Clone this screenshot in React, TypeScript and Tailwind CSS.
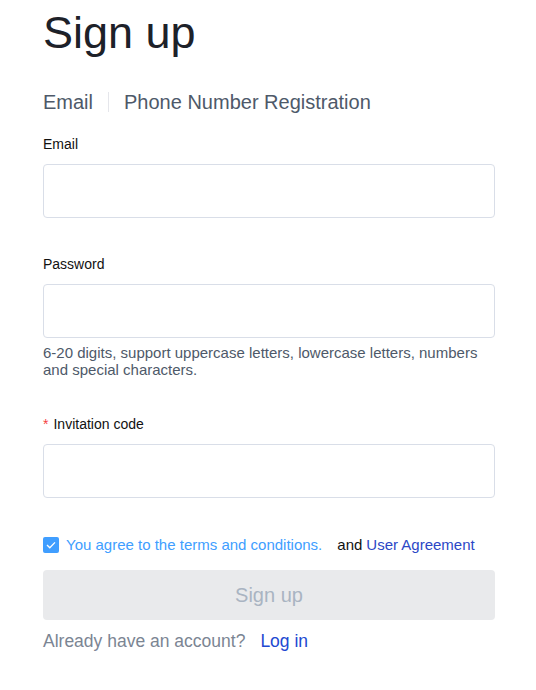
import React, { useState } from "react";

const Field: React.FC<{ label: string; required?: boolean; type?: string; className?: string }> = ({
  label,
  required,
  type = "text",
  className = "",
}) => (
  <div className={className}>
    <label className="block text-[14px] leading-[20px] text-[#111]">
      {required && <span className="mr-[5px] text-[#f53f3f]">*</span>}
      {label}
    </label>
    <input
      type={type}
      className="mt-[10px] block h-[54px] w-full rounded-[4px] border border-[#d9dee8] bg-white px-3 outline-none"
    />
  </div>
);

const App: React.FC = () => {
  const [agree, setAgree] = useState(true);

  return (
    <div className="min-h-[690px] bg-white font-['Liberation_Sans',Arial,sans-serif]">
      <div className="ml-[43px] w-[452px] pt-[10px]">
        <h1 className="text-[45px] leading-[45px] text-[#1d2129]">Sign up</h1>

        {/* tabs */}
        <div className="mt-[33px] flex items-center text-[20px] leading-[28px]">
          <span className="text-[#4e5969]">Email</span>
          <span className="mx-[15px] h-[20px] w-px bg-[#e5e6eb]" />
          <span className="text-[#4e5969]">Phone Number Registration</span>
        </div>

        <Field label="Email" className="mt-[18px]" />
        <Field label="Password" type="password" className="mt-[36px]" />
        <p className="mt-[6px] text-[15px] leading-[17px] text-[#4e5969]">
          6-20 digits, support uppercase letters, lowercase letters, numbers and special characters.
        </p>
        <Field label="Invitation code" required className="mt-[36px]" />

        {/* agreement */}
        <div className="mt-[37px] flex items-center text-[15px] leading-[20px]">
          <button
            onClick={() => setAgree(!agree)}
            className={`flex h-[16px] w-[16px] items-center justify-center rounded-[2px] ${
              agree ? "bg-[#409eff]" : "border border-[#c9cdd4] bg-white"
            }`}
          >
            {agree && (
              <svg width="10" height="8" viewBox="0 0 10 8" fill="none">
                <path d="M1 4l2.8 2.8L9 1.4" stroke="white" strokeWidth="1.3" />
              </svg>
            )}
          </button>
          <span className="ml-[7px] text-[#409eff]">You agree to the terms and conditions.</span>
          <span className="ml-[15px] text-[#111]">and</span>
          <a className="ml-[4px] text-[#2c47c6]">User Agreement</a>
        </div>

        <button className="mt-[15px] flex h-[50px] w-full items-center justify-center rounded-[4px] bg-[#e9eaec] text-[20px] text-[#a9b4c2]">
          Sign up
        </button>

        <div className="mt-[9px] flex items-center text-[17.5px] leading-[24px]">
          <span className="text-[#7b8593]">Already have an account?</span>
          <a className="ml-[15px] text-[#2148d1]">Log in</a>
        </div>
      </div>
    </div>
  );
};

export default App;
